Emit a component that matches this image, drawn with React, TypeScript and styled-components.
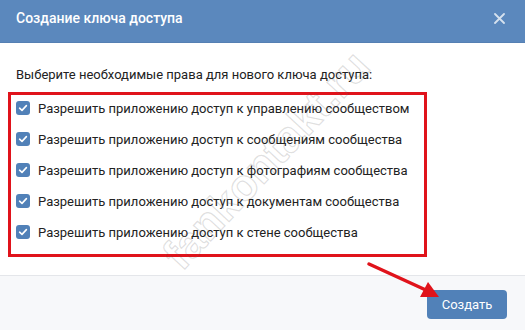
import React, { FC } from 'react'
import styled, { createGlobalStyle } from 'styled-components'

const GlobalStyle = createGlobalStyle`
  html, body {
    margin: 0;
    padding: 0;
    background: #ffffff;
  }
  body {
    font-family: Roboto, 'Liberation Sans', Arial, sans-serif;
  }
`

const permissions = [
  'Разрешить приложению доступ к управлению сообществом',
  'Разрешить приложению доступ к сообщениям сообщества',
  'Разрешить приложению доступ к фотографиям сообщества',
  'Разрешить приложению доступ к документам сообщества',
  'Разрешить приложению доступ к стене сообщества',
]

const Modal = styled.div`
  position: relative;
  width: 525px;
  height: 330px;
  overflow: hidden;
  display: flex;
  flex-direction: column;
  background: #ffffff;
`

const Header = styled.div`
  height: 43px;
  box-sizing: border-box;
  padding: 0 20px 0 16px;
  display: flex;
  align-items: center;
  justify-content: space-between;
  background: #5b88bd;
  border-bottom: 1px solid #5580b3;
`

const Title = styled.div`
  color: #ffffff;
  font-size: 14px;
  font-weight: 500;
  padding-bottom: 6px;
`

const CloseIcon = styled.svg`
  width: 11px;
  height: 11px;
  margin-bottom: 6px;
`

const Body = styled.div`
  flex: 1;
  padding: 24px 0 0 8px;
`

const Lead = styled.div`
  font-size: 13px;
  line-height: 16px;
  color: #222222;
  padding-left: 8px;
`

const Highlight = styled.div`
  margin-top: 9px;
  width: 419px;
  height: 165px;
  box-sizing: border-box;
  border: 3px solid #e0131b;
  padding: 4px 0 0 5px;
  display: flex;
  flex-direction: column;
  gap: 13px;
`

const Row = styled.label`
  display: flex;
  align-items: center;
  gap: 8px;
  height: 18px;
  font-size: 13px;
  color: #222222;
`

const Box = styled.span`
  width: 14px;
  height: 14px;
  border-radius: 3px;
  background: #5181b8;
  display: flex;
  align-items: center;
  justify-content: center;
  flex-shrink: 0;
`

const Footer = styled.div`
  height: 55px;
  box-sizing: border-box;
  border-top: 1px solid #e4e6ea;
  background: #f7f8fa;
  display: flex;
  justify-content: flex-end;
  align-items: flex-start;
  padding: 14px 18px 0 0;
`

const Button = styled.button`
  width: 80px;
  height: 29px;
  border: none;
  border-radius: 4px;
  background: #5181b8;
  color: #ffffff;
  font-family: Roboto, 'Liberation Sans', Arial, sans-serif;
  font-size: 13px;
  padding: 0;
`

const Arrow = styled.svg`
  position: absolute;
  left: 0;
  top: 0;
  width: 525px;
  height: 330px;
  pointer-events: none;
`

const Watermark = styled.div`
  position: absolute;
  left: 266px;
  top: 160px;
  transform: translate(-50%, -50%) rotate(-47deg);
  font-family: 'Liberation Sans', Arial, sans-serif;
  font-size: 44px;
  font-weight: 700;
  color: transparent;
  -webkit-text-stroke: 1.2px rgba(90, 90, 90, 0.2);
  white-space: nowrap;
  pointer-events: none;
`

const Check: FC = () => (
  <svg width="10" height="10" viewBox="0 0 10 10">
    <path
      d="M1.6 5.2 L4 7.4 L8.4 2.6"
      fill="none"
      stroke="#ffffff"
      strokeWidth="1.6"
      strokeLinecap="round"
      strokeLinejoin="round"
    />
  </svg>
)

const App: FC = () => (
  <>
    <GlobalStyle />
    <Modal>
      <Header>
        <Title>Создание ключа доступа</Title>
        <CloseIcon viewBox="0 0 11 11">
          <path
            d="M1 1 L10 10 M10 1 L1 10"
            stroke="rgba(255,255,255,0.75)"
            strokeWidth="1.8"
            strokeLinecap="round"
          />
        </CloseIcon>
      </Header>
      <Body>
        <Lead>Выберите необходимые права для нового ключа доступа:</Lead>
        <Highlight>
          {permissions.map((text) => (
            <Row key={text}>
              <Box>
                <Check />
              </Box>
              {text}
            </Row>
          ))}
        </Highlight>
      </Body>
      <Footer>
        <Button>Создать</Button>
      </Footer>
      <Watermark>fankontakt.ru</Watermark>
      <Arrow viewBox="0 0 525 330">
        <line x1="369" y1="264" x2="428" y2="291" stroke="#e0131b" strokeWidth="3.5" strokeLinecap="round" />
        <polygon points="439,297 420,297 428,282" fill="#e0131b" />
      </Arrow>
    </Modal>
  </>
)

export default App
